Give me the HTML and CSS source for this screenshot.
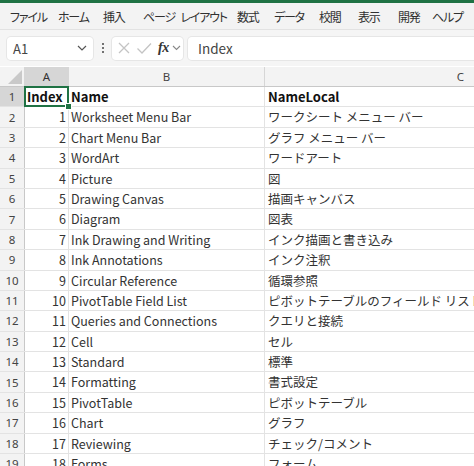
FILE: index.html
```html
<!DOCTYPE html>
<html lang="ja">
<head>
<meta charset="utf-8">
<link rel="stylesheet" href="styles.css">
</head>
<body>
<div class="app">
  <div class="topbar"></div>
  <div class="ribbon">
    <span class="tab t1">ファイル</span>
    <span class="tab t2">ホーム</span>
    <span class="tab t3">挿入</span>
    <span class="tab t4">ページ レイアウト</span>
    <span class="tab t5">数式</span>
    <span class="tab t6">データ</span>
    <span class="tab t7">校閲</span>
    <span class="tab t8">表示</span>
    <span class="tab t9">開発</span>
    <span class="tab t10">ヘルプ</span>
  </div>
  <div class="fbar">
    <div class="namebox">
      <span class="nb-text">A1</span>
      <svg class="chev" width="10" height="6" viewBox="0 0 10 6"><path d="M1 1 L5 5 L9 1" fill="none" stroke="#555" stroke-width="1.2"/></svg>
    </div>
    <div class="vdots"><i></i><i></i><i></i></div>
    <div class="funcbox">
      <svg class="ico" width="14" height="14" viewBox="0 0 14 14"><path d="M2 2 L12 12 M12 2 L2 12" stroke="#c4c4c4" stroke-width="1.3" fill="none"/></svg>
      <svg class="ico" width="16" height="14" viewBox="0 0 16 14"><path d="M1.5 7.5 L6 12 L15 2.5" stroke="#c4c4c4" stroke-width="1.3" fill="none"/></svg>
      <span class="fx">fx</span>
      <svg class="chev2" width="9" height="6" viewBox="0 0 9 6"><path d="M1 1 L4.5 4.5 L8 1" fill="none" stroke="#888" stroke-width="1.1"/></svg>
    </div>
    <div class="finput">Index</div>
  </div>
  <div class="sheet">
    <div class="hrow">
      <div class="corner"><span class="tri"></span></div>
      <div class="ch ch-a sel">A</div>
      <div class="ch ch-b">B</div>
      <div class="ch ch-c">C</div>
    </div>
    <div class="row"><div class="rh sel">1</div><div class="c ca b sela">Index</div><div class="c cb b">Name</div><div class="c cc b">NameLocal</div></div>
    <div class="row"><div class="rh">2</div><div class="c ca">1</div><div class="c cb">Worksheet Menu Bar</div><div class="c cc">ワークシート メニュー バー</div></div>
    <div class="row"><div class="rh">3</div><div class="c ca">2</div><div class="c cb">Chart Menu Bar</div><div class="c cc">グラフ メニュー バー</div></div>
    <div class="row"><div class="rh">4</div><div class="c ca">3</div><div class="c cb">WordArt</div><div class="c cc">ワードアート</div></div>
    <div class="row"><div class="rh">5</div><div class="c ca">4</div><div class="c cb">Picture</div><div class="c cc">図</div></div>
    <div class="row"><div class="rh">6</div><div class="c ca">5</div><div class="c cb">Drawing Canvas</div><div class="c cc">描画キャンバス</div></div>
    <div class="row"><div class="rh">7</div><div class="c ca">6</div><div class="c cb">Diagram</div><div class="c cc">図表</div></div>
    <div class="row"><div class="rh">8</div><div class="c ca">7</div><div class="c cb">Ink Drawing and Writing</div><div class="c cc">インク描画と書き込み</div></div>
    <div class="row"><div class="rh">9</div><div class="c ca">8</div><div class="c cb">Ink Annotations</div><div class="c cc">インク注釈</div></div>
    <div class="row"><div class="rh">10</div><div class="c ca">9</div><div class="c cb">Circular Reference</div><div class="c cc">循環参照</div></div>
    <div class="row"><div class="rh">11</div><div class="c ca">10</div><div class="c cb">PivotTable Field List</div><div class="c cc">ピボットテーブルのフィールド リスト</div></div>
    <div class="row"><div class="rh">12</div><div class="c ca">11</div><div class="c cb">Queries and Connections</div><div class="c cc">クエリと接続</div></div>
    <div class="row"><div class="rh">13</div><div class="c ca">12</div><div class="c cb">Cell</div><div class="c cc">セル</div></div>
    <div class="row"><div class="rh">14</div><div class="c ca">13</div><div class="c cb">Standard</div><div class="c cc">標準</div></div>
    <div class="row"><div class="rh">15</div><div class="c ca">14</div><div class="c cb">Formatting</div><div class="c cc">書式設定</div></div>
    <div class="row"><div class="rh">16</div><div class="c ca">15</div><div class="c cb">PivotTable</div><div class="c cc">ピボットテーブル</div></div>
    <div class="row"><div class="rh">17</div><div class="c ca">16</div><div class="c cb">Chart</div><div class="c cc">グラフ</div></div>
    <div class="row"><div class="rh">18</div><div class="c ca">17</div><div class="c cb">Reviewing</div><div class="c cc">チェック/コメント</div></div>
    <div class="row"><div class="rh">19</div><div class="c ca">18</div><div class="c cb">Forms</div><div class="c cc">フォーム</div></div>
  </div>
</div>
</body>
</html>
```

FILE: styles.css
```css
html, body {
  margin: 0;
  padding: 0;
  background: #ffffff;
  overflow: hidden;
}
body {
  width: 474px;
  height: 466px;
  font-family: "Noto Sans CJK JP", "Noto Sans", sans-serif;
  color: #222;
}
.app {
  width: 474px;
  height: 466px;
  overflow: hidden;
}
.topbar {
  height: 3px;
  background: #1f7244;
}
.ribbon {
  height: 27px;
  background: #f3f3f3;
  border-bottom: 1px solid #e2e2e2;
  display: flex;
  align-items: center;
  font-size: 12px;
  letter-spacing: -1.2px;
  word-spacing: 4px;
  color: #303030;
  font-feature-settings: "palt";
  white-space: nowrap;
  padding-left: 10px;
  box-sizing: border-box;
}
.tab { display: block; flex-shrink: 0; }
.t1 { width: 48px; }
.t2 { width: 45px; }
.t3 { width: 40px; }
.t4 { width: 94px; }
.t5 { width: 37px; }
.t6 { width: 45px; }
.t7 { width: 39px; }
.t8 { width: 40px; }
.t9 { width: 34px; }

.fbar {
  height: 36px;
  background: #f5f5f5;
  display: flex;
  align-items: center;
  padding-left: 7px;
  box-sizing: border-box;
}
.namebox {
  width: 86px;
  height: 23px;
  background: #fff;
  border-radius: 4px;
  box-shadow: 0 0 0 1px #e6e6e6;
  display: flex;
  align-items: center;
  justify-content: space-between;
  padding: 0 6px 0 6px;
  box-sizing: border-box;
  font-size: 13px;
  color: #444;
}
.vdots {
  width: 19px;
  display: flex;
  flex-direction: column;
  align-items: center;
  gap: 2px;
}
.vdots i {
  display: block;
  width: 2px;
  height: 2px;
  background: #444;
  border-radius: 1px;
}
.funcbox {
  width: 71px;
  height: 23px;
  background: #fff;
  border-radius: 4px;
  box-shadow: 0 0 0 1px #e6e6e6;
  display: flex;
  align-items: center;
  gap: 5px;
  padding-left: 5px;
  box-sizing: border-box;
}
.fx {
  font-family: "Liberation Serif", "DejaVu Serif", serif;
  font-style: italic;
  font-weight: bold;
  font-size: 14px;
  color: #333;
  margin-left: 1px;
  letter-spacing: -0.5px;
}
.chev2 { margin-left: -2px; }
.finput {
  margin-left: 5px;
  flex: 1;
  height: 23px;
  background: #fff;
  border-radius: 4px 0 0 4px;
  box-shadow: 0 0 0 1px #e6e6e6;
  display: flex;
  align-items: center;
  padding-left: 10px;
  font-size: 13.5px;
  color: #444;
}

.sheet {
  margin-top: 1px;
  width: 660px;
}
.hrow {
  display: grid;
  grid-template-columns: 25px 44px 196px 392px;
  height: 19px;
  background: #f3f3f3;
  border-bottom: 1px solid #c8c8c8;
}
.corner {
  position: relative;
  border-right: 1px solid #d6d6d6;
}
.tri {
  position: absolute;
  right: 2px;
  bottom: 2px;
  width: 0;
  height: 0;
  border-left: 14px solid transparent;
  border-bottom: 14px solid #c9c9c9;
}
.ch {
  font-size: 11.5px;
  color: #444;
  display: flex;
  align-items: center;
  justify-content: center;
  border-right: 1px solid #d6d6d6;
  font-family: "Noto Sans", "Liberation Sans", sans-serif;
}
.ch.sel {
  background: #d6d6d6;
  color: #333;
}
.row {
  display: grid;
  grid-template-columns: 25px 44px 196px 392px;
  height: 20.4px;
  box-sizing: border-box;
  border-bottom: 1px solid #e3e3e3;
}
.rh {
  background: #f3f3f3;
  border-right: 1px solid #c8c8c8;
  font-size: 11.5px;
  color: #444;
  display: flex;
  align-items: center;
  justify-content: center;
  font-family: "Noto Sans", "Liberation Sans", sans-serif;
}
.rh.sel {
  background: #d6d6d6;
}
.c {
  font-size: 12.5px;
  line-height: 19px;
  white-space: nowrap;
  overflow: hidden;
  border-right: 1px solid #e3e3e3;
  padding-left: 2px;
  color: #333;
}
.ca {
  text-align: right;
  padding-right: 2px;
  padding-left: 0;
}
.cc { padding-left: 3px; }
.b {
  font-weight: bold;
  color: #111;
  font-size: 13px;
}
.ca.b { text-align: left; padding-left: 2px; }
.sela {
  position: relative;
  overflow: visible;
}
.sela::after {
  content: "";
  position: absolute;
  left: -1px;
  top: -1px;
  right: -1px;
  bottom: -1px;
  border: 2px solid #1f7244;
}
.sela::before {
  content: "";
  position: absolute;
  right: -4px;
  bottom: -4px;
  width: 5px;
  height: 5px;
  background: #1f7244;
  border: 1px solid #fff;
  z-index: 2;
}
```
